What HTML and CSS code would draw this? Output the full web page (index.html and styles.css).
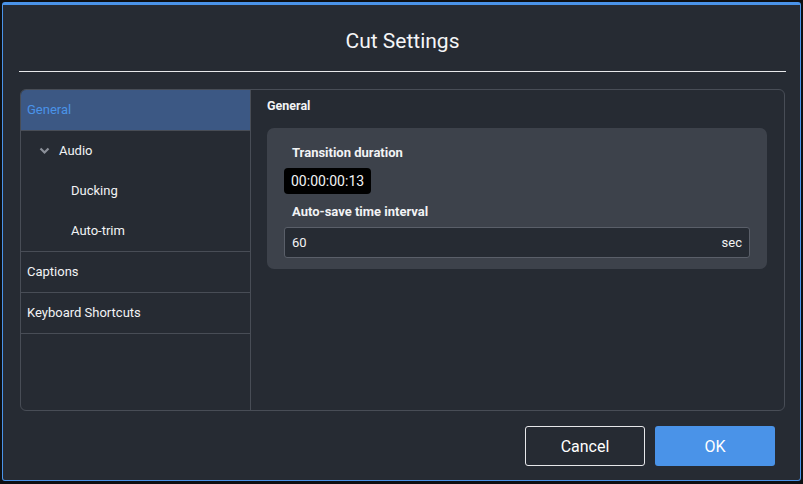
FILE: index.html
```html
<!doctype html>
<html lang="en">
<head>
<meta charset="utf-8">
<title>Cut Settings</title>
<link rel="stylesheet" href="styles.css">
</head>
<body>

	<div class="dialog">

		<div class="dlgHead">Cut Settings</div>

		<div class="panel">

			<div class="side">
				<div class="row sel">General</div>
				<div class="group">
					<div class="row sub">
						<svg class="chev" width="11" height="8" viewBox="0 0 11 8"><path d="M1.5 1.5 L5.5 5.5 L9.5 1.5" fill="none" stroke="#8b9099" stroke-width="2.2"/></svg>
						Audio
					</div>
					<div class="row subsub">Ducking</div>
					<div class="row subsub">Auto-trim</div>
				</div>
				<div class="row">Captions</div>
				<div class="row">Keyboard Shortcuts</div>
			</div>

			<div class="main">
				<div class="mainTitle">General</div>
				<div class="card">
					<div class="lbl">Transition duration</div>
					<div class="time">00:00:00:13</div>
					<div class="lbl second">Auto-save time interval</div>
					<div class="field"><span>60</span><span>sec</span></div>
				</div>
			</div>

		</div>

		<div class="foot">
			<button class="btn cancel">Cancel</button>
			<button class="btn ok">OK</button>
		</div>

	</div>

</body>
</html>
```

FILE: styles.css
```css
	html { --blue: #4a93e8; --line: #484d56; --back: #262b33; }

	body { background-color: #0d0f12; font: 13px Roboto, "Liberation Sans", sans-serif; margin: 0; color: #f2f3f5; }

	.dialog { background-color: var( --back ); border: 1px solid var( --blue ); border-top-width: 3px; border-radius: 3px;
		box-sizing: border-box; display: flex; flex-direction: column; height: 479px; margin: 2px 0 0 2px; width: 799px; }

	.dlgHead { border-bottom: 1px solid #e8e9eb; box-sizing: border-box; font-size: 21px; height: 67px; line-height: 24px;
		margin: 0 14px 0 16px; padding-top: 24px; text-align: center; color: #f4f5f7; }

	.panel { border: 1px solid var( --line ); border-radius: 6px; box-sizing: border-box; display: flex; height: 322px;
		margin: 17px 15px 0 17px; overflow: hidden; }

	.side { border-right: 1px solid var( --line ); width: 229px; }
	.row { align-items: center; border-bottom: 1px solid var( --line ); display: flex; height: 40px; padding: 0 0 1px 6px; box-sizing: border-box; height: 41px; }
	.row.sel { background-color: #3c5884; color: var( --blue ); }
	.group { border-bottom: 1px solid var( --line ); }
	.group .row { border-bottom: none; height: 40px; }
	.row.sub { padding-left: 18px; }
	.chev { margin-right: 9px; margin-top: 1px; }
	.row.subsub { padding-left: 50px; }

	.main { flex: 1; padding: 9px 17px 0 16px; }
	.mainTitle { font-size: 12.5px; font-weight: 700; line-height: 14px; margin-bottom: 15px; }

	.card { background-color: #3d424b; border-radius: 7px; display: flex; flex-direction: column; align-items: flex-start;
		padding: 16px 17px 11px 17px; }
	.lbl { font-weight: 700; line-height: 17px; margin-left: 8px; }
	.lbl.second { margin-top: 9px; }
	.time { background-color: #000; border-radius: 4px; font-size: 14px; height: 26px; line-height: 26px; margin-top: 7px; padding: 0 7px; }
	.field { align-self: stretch; background-color: var( --back ); border: 1px solid #5a5f69; border-radius: 3px; box-sizing: border-box;
		display: flex; height: 31px; justify-content: space-between; align-items: center; margin-top: 7px; padding: 0 7px 0 7px; }

	.foot { display: flex; gap: 10px; justify-content: flex-end; margin: 15px 25px 0 0; }
	.btn { border-radius: 3px; box-sizing: border-box; cursor: pointer; font: 16px Roboto, "Liberation Sans", sans-serif; height: 40px; width: 120px; color: #fff; }
	.cancel { background-color: transparent; border: 1px solid #e6e7ea; }
	.ok { background-color: var( --blue ); border: none; }
```
